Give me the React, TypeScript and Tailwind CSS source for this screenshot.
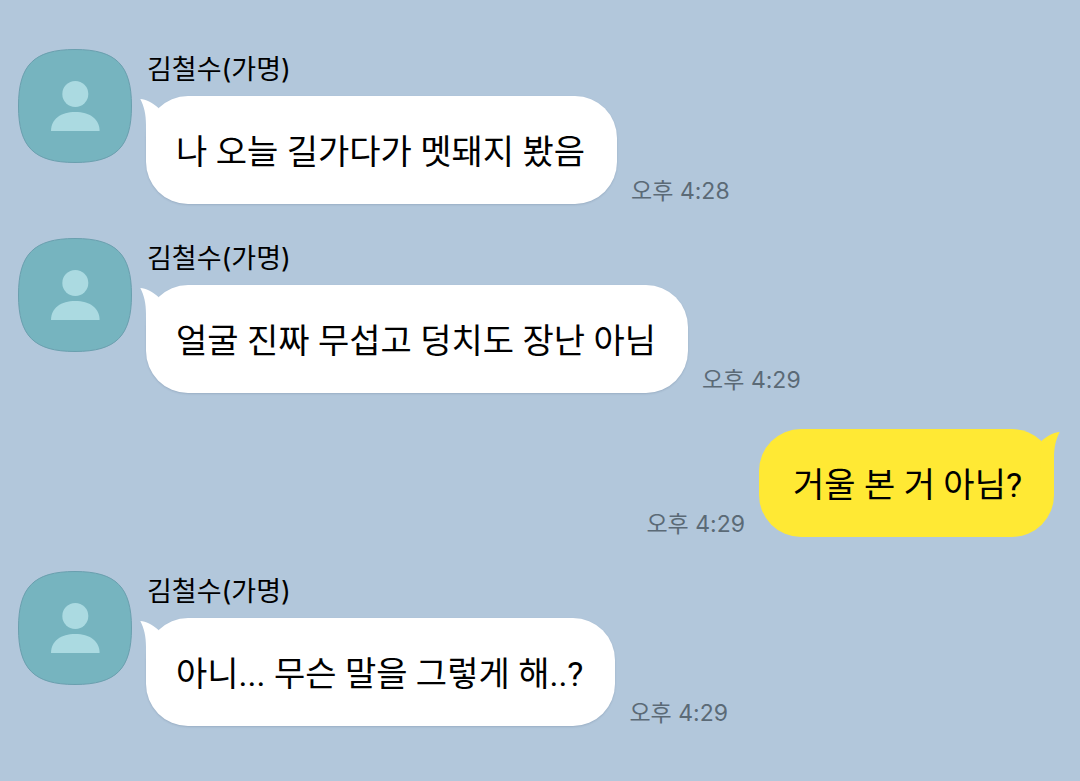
import React from 'react';

interface Message {
  id: number;
  sender: string | null;
  text: string;
  time: string;
}

const messages: Message[] = [
  { id: 1, sender: '김철수(가명)', text: '나 오늘 길가다가 멧돼지 봤음', time: '오후 4:28' },
  { id: 2, sender: '김철수(가명)', text: '얼굴 진짜 무섭고 덩치도 장난 아님', time: '오후 4:29' },
  { id: 3, sender: null, text: '거울 본 거 아님?', time: '오후 4:29' },
  { id: 4, sender: '김철수(가명)', text: '아니... 무슨 말을 그렇게 해..?', time: '오후 4:29' },
];

const Avatar: React.FC = () => (
  <svg viewBox="0 0 114 114" className="size-[114px] shrink-0" aria-hidden="true">
    <path
      d="M57 .5C98 .5 113.500 16 113.500 57S98 113.500 57 113.500 .5 98 .5 57 16 .5 57 .5Z"
      fill="#76b4bf"
      stroke="#6a9fae"
    />
    <circle cx="57.300" cy="45" r="13" fill="#abdae1" />
    <path d="M33 82C33 70 43 63 57.300 63S81.600 70 81.600 82Z" fill="#abdae1" />
  </svg>
);

const Time: React.FC<{ value: string }> = ({ value }) => (
  <time className="whitespace-nowrap font-['Inter','Noto_Sans_CJK_KR',sans-serif] text-[23px] leading-[26px] text-[#5b6a76]">
    {value}
  </time>
);

// Small horn at the top corner of a bubble
const Tail: React.FC<{ className: string }> = ({ className }) => (
  <svg viewBox="0 0 20 40" className={`absolute top-[3px] h-10 w-5 ${className}`} aria-hidden="true">
    <path d="M.3 0C6 .5 12 3 18.500 9L20 40H6V26C6 15 4 7 .3 0Z" fill="currentColor" />
  </svg>
);

const ReceivedMessage: React.FC<{ message: Message }> = ({ message }) => (
  <li className="flex items-start gap-3.5">
    <Avatar />
    <div className="flex min-w-0 flex-col">
      <span className="h-[47px] pl-px font-['Inter','Noto_Sans_CJK_KR',sans-serif] text-[27px] leading-[42px] text-black">
        {message.sender}
      </span>
      <div className="flex items-end gap-3.5">
        <div className="relative rounded-[42px] bg-white pb-7 pl-[30px] pr-8 pt-8 shadow-[0_1px_2px_rgba(60,80,110,0.2)]">
          <Tail className="-left-1.5 text-white" />
          <p className="text-[34px] leading-[48px] text-black">{message.text}</p>
        </div>
        <Time value={message.time} />
      </div>
    </div>
  </li>
);

const SentMessage: React.FC<{ message: Message }> = ({ message }) => (
  <li className="flex items-end justify-end gap-3.5 pr-2 pt-0.5">
    <Time value={message.time} />
    <div className="relative rounded-[42px] bg-[#ffe934] pb-7 pl-[34px] pr-8 pt-8">
      <Tail className="-right-1.5 -scale-x-100 text-[#ffe934]" />
      <p className="text-[34px] leading-[48px] text-black">{message.text}</p>
    </div>
  </li>
);

export default function App() {
  return (
    <main className="min-h-screen bg-[#b2c7db] px-[18px] pb-12 pt-[49px] font-['Roboto','Noto_Sans_CJK_KR',sans-serif]" lang="ko">
      <ol className="flex flex-col gap-[34px]">
        {messages.map((message) =>
          message.sender ? (
            <ReceivedMessage key={message.id} message={message} />
          ) : (
            <SentMessage key={message.id} message={message} />
          )
        )}
      </ol>
    </main>
  );
}
